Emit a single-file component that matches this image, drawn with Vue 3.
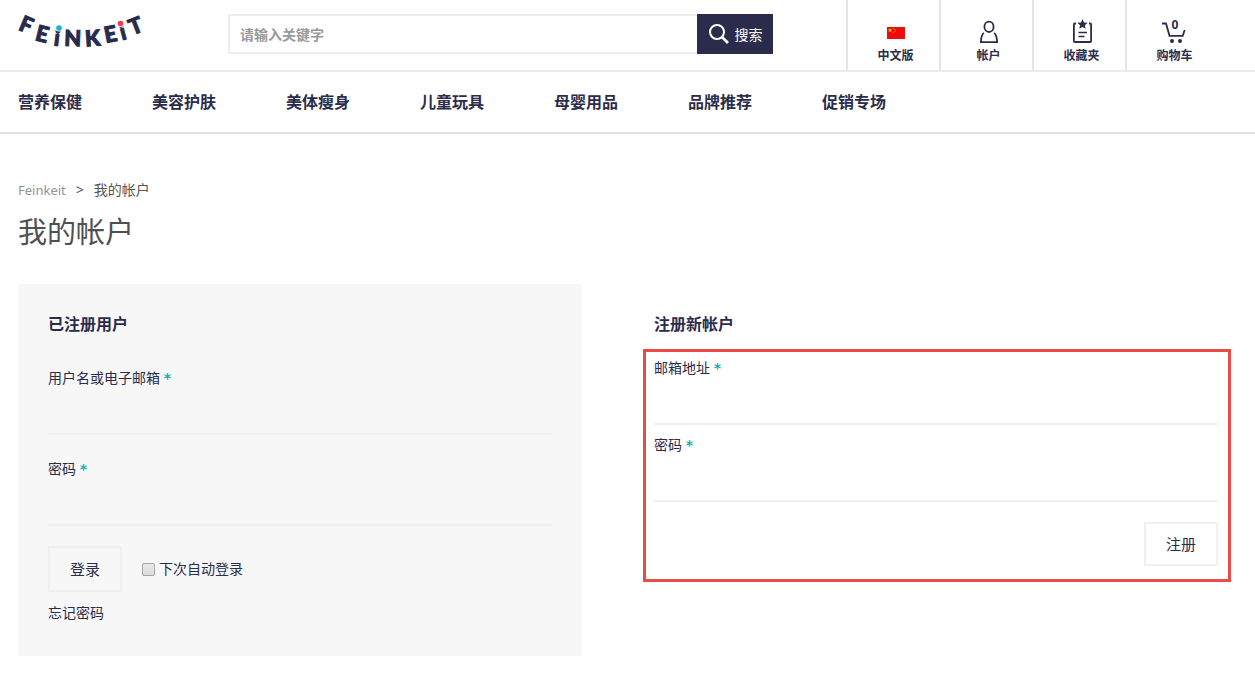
<script setup>
import { ref } from 'vue'

const categories = ['营养保健', '美容护肤', '美体瘦身', '儿童玩具', '母婴用品', '品牌推荐', '促销专场']

const logoLetters = [
  { char: 'F', x: 29, y: 18, angle: 23 },
  { char: 'E', x: 44, y: 27, angle: 14 },
  { char: 'i', x: 58, y: 31, angle: 7 },
  { char: 'N', x: 73, y: 31, angle: 2 },
  { char: 'K', x: 92, y: 31, angle: -4 },
  { char: 'E', x: 109, y: 27, angle: -11 },
  { char: 'i', x: 121, y: 25, angle: -15 },
  { char: 'T', x: 133, y: 19, angle: -21 },
]

const keyword = ref('')
const remember = ref(false)
const login = ref({ user: '', password: '' })
const signup = ref({ email: '', password: '' })
</script>

<template>
  <div class="page">
    <header class="header">
      <a href="#" class="logo" aria-label="Feinkeit">
        <svg width="150" height="60" viewBox="8 0 150 60">
          <g
            v-for="(letter, i) in logoLetters"
            :key="i"
            :transform="`translate(${letter.x} ${letter.y}) rotate(${letter.angle})`"
          >
            <text class="logo-letter" text-anchor="middle" y="15">{{ letter.char }}</text>
          </g>
          <circle cx="59" cy="28" r="3.600" fill="#fff" />
          <circle cx="120.500" cy="23.500" r="3.600" fill="#fff" />
          <circle cx="59" cy="28" r="2.800" fill="#12b8bd" />
          <circle cx="120.500" cy="23.500" r="2.800" fill="#f5394f" />
        </svg>
      </a>

      <form class="search" role="search" @submit.prevent>
        <input v-model="keyword" type="text" class="search-input" placeholder="请输入关键字" aria-label="请输入关键字" />
        <button type="submit" class="search-button">
          <svg width="22" height="22" viewBox="0 0 22 22" fill="none" stroke="#fff">
            <circle cx="9" cy="9" r="7" stroke-width="2" />
            <path d="M14 14l6 6" stroke-width="2.600" />
          </svg>
          搜索
        </button>
      </form>

      <nav class="tools">
        <a href="#" class="tool">
          <svg width="26" height="26" viewBox="0 0 26 26">
            <rect x="4" y="9" width="18" height="12" fill="#f00a0a" />
            <path d="M7 10.200l.6 1.400h1.500l-1.200 1 .5 1.500L7 13.200l-1.400.9.5-1.500-1.200-1h1.500z" fill="#ffde00" />
            <g fill="#ffb300">
              <circle cx="10.500" cy="10.500" r=".6" /><circle cx="12" cy="11.500" r=".6" />
              <circle cx="12" cy="13.300" r=".6" /><circle cx="10.500" cy="14.500" r=".6" />
            </g>
          </svg>
          中文版
        </a>
        <a href="#" class="tool">
          <svg width="26" height="26" viewBox="0 0 26 26" fill="none" stroke="#2b2c4b" stroke-width="1.800">
            <ellipse cx="13" cy="8.800" rx="4.600" ry="5.200" />
            <path d="M7.800 14.800C6 16.400 5 19 4.900 24.100h16.200c-.1-5.100-1.100-7.700-2.900-9.300" />
          </svg>
          帐户
        </a>
        <a href="#" class="tool">
          <svg width="26" height="26" viewBox="0 0 26 26" fill="none" stroke="#2b2c4b" stroke-width="1.800">
            <path d="M7 5.500H5.800Q4.900 5.500 4.900 6.400V23q0 1 1 1h15.200q1 0 1-1V6.400q0-.9-.9-.9H20" />
            <path d="M9.500 14.500h8.500M9.500 18.500h6" stroke-width="1.700" />
            <path d="M13.500 1l1.500 3.400 3.700.3-2.800 2.500.8 3.600-3.200-1.900-3.200 1.900.8-3.600-2.800-2.500 3.700-.3z" fill="#2b2c4b" stroke="none" />
          </svg>
          收藏夹
        </a>
        <a href="#" class="tool">
          <svg width="26" height="26" viewBox="0 0 26 26" fill="none" stroke="#2b2c4b" stroke-width="1.800">
            <path d="M0 5.500h4L7.500 17.800h13.200L22.700 12" />
            <circle cx="10" cy="23" r="2" fill="#2b2c4b" stroke="none" />
            <circle cx="18" cy="23" r="2" fill="#2b2c4b" stroke="none" />
            <text class="cart-count" x="13" y="11" text-anchor="middle">0</text>
          </svg>
          购物车
        </a>
      </nav>
    </header>

    <nav class="categories">
      <a v-for="name in categories" :key="name" href="#">{{ name }}</a>
    </nav>

    <main class="main">
      <div class="breadcrumb">
        <a href="#">Feinkeit</a><span>&gt;</span><span>我的帐户</span>
      </div>
      <h1>我的帐户</h1>

      <div class="columns">
        <section class="login">
          <h2>已注册用户</h2>
          <form class="login-form" @submit.prevent>
            <div class="field">
              <label for="login-user">用户名或电子邮箱 <span class="required">*</span></label>
              <input id="login-user" v-model="login.user" type="text" />
            </div>
            <div class="field">
              <label for="login-password">密码 <span class="required">*</span></label>
              <input id="login-password" v-model="login.password" type="password" />
            </div>
            <div class="login-actions">
              <button type="submit" class="button">登录</button>
              <label class="remember">
                <input v-model="remember" type="checkbox" />下次自动登录
              </label>
            </div>
            <a href="#" class="forgot">忘记密码</a>
          </form>
        </section>

        <section class="signup">
          <h2>注册新帐户</h2>
          <form class="signup-form" @submit.prevent>
            <div class="field">
              <label for="signup-email">邮箱地址 <span class="required">*</span></label>
              <input id="signup-email" v-model="signup.email" type="email" />
            </div>
            <div class="field">
              <label for="signup-password">密码 <span class="required">*</span></label>
              <input id="signup-password" v-model="signup.password" type="password" />
            </div>
            <button type="submit" class="button">注册</button>
          </form>
        </section>
      </div>
    </main>
  </div>
</template>

<style>
body {
  margin: 0;
  background: #fff;
}
</style>

<style scoped>
.page,
.page button,
.page input {
  font-family: "Noto Sans", "Noto Sans CJK SC", sans-serif;
}

.page {
  color: #2b2c4b;
  font-size: 14px;
  line-height: 20px;
}

.page * {
  box-sizing: border-box;
}

a {
  color: inherit;
  text-decoration: none;
}

.header {
  display: flex;
  align-items: flex-start;
  padding: 0 37px 0 8px;
  border-bottom: 2px solid #ebebeb;
}

.logo {
  flex: 0 0 220px;
}

.logo svg,
.tool svg {
  display: block;
  overflow: visible;
}

.logo-letter {
  font-family: Lato, sans-serif;
  font-size: 22px;
  font-weight: 900;
  fill: #272c4c;
  stroke: #272c4c;
  stroke-width: 1px;
}

.search {
  display: flex;
  flex: 0 1 545px;
  height: 40px;
  margin-top: 14px;
}

.search-input {
  flex: 1;
  min-width: 0;
  padding: 0 10px;
  border: 2px solid #ededed;
  border-right: 0;
  border-radius: 0;
  outline: 0;
  background: #fff;
  color: #2b2c4b;
  font-size: 14px;
  font-weight: 700;
}

.search-input::placeholder {
  color: #999;
  opacity: 1;
}

.search-button {
  display: flex;
  align-items: center;
  justify-content: center;
  gap: 5px;
  width: 76px;
  padding: 0;
  border: 0;
  background: #2b2c4b;
  color: #fff;
  font-size: 14px;
}

.tools {
  display: flex;
  margin-left: auto;
}

.tool {
  display: flex;
  flex-direction: column;
  align-items: center;
  gap: 4px;
  width: 93px;
  height: 70px;
  padding: 18px 0 0 4px;
  border-left: 2px solid #e4e4e4;
  font-size: 12px;
  font-weight: 700;
  line-height: 16px;
}

.cart-count {
  fill: #2b2c4b;
  stroke: none;
  font-size: 12px;
  font-weight: 700;
}

.categories {
  display: flex;
  gap: 70px;
  padding: 20px 18px;
  border-bottom: 2px solid #e2e2e2;
  font-size: 16px;
  font-weight: 700;
}

.main {
  padding: 46px 37px 0 18px;
}

.breadcrumb {
  display: flex;
  gap: 10px;
  color: #555;
}

.breadcrumb a {
  color: #949494;
  font-size: 13px;
}

h1 {
  margin: 12px 0 32px;
  color: #505050;
  font-size: 29px;
  font-weight: 400;
  line-height: 40px;
}

h2 {
  margin: 0;
  font-size: 16px;
  font-weight: 700;
  line-height: 20px;
}

.columns {
  display: grid;
  grid-template-columns: 1fr 1fr;
  align-items: start;
  gap: 72px;
}

.login {
  padding: 30px 30px 33px;
  background: #f7f7f7;
}

.login-form {
  display: grid;
  gap: 24px;
  margin-top: 34px;
}

.signup {
  padding-top: 30px;
}

.signup-form {
  display: grid;
  gap: 10px;
  margin: 15px -13px 0 -11px;
  padding: 6px 10px 13px 8px;
  border: 3px solid #e84c47;
}

.field label {
  display: block;
}

.field input {
  display: block;
  width: 100%;
  height: 47px;
  padding: 0;
  border: 0;
  border-bottom: 2px solid #f0f0f0;
  border-radius: 0;
  outline: 0;
  background: transparent;
  color: #2b2c4b;
  font-size: 14px;
}

.required {
  color: #14adb5;
  font-family: "DejaVu Sans", sans-serif;
  font-weight: 700;
}

.button {
  width: 74px;
  height: 46px;
  padding: 0 0 2px;
  border: 2px solid #f0f0f0;
  background: transparent;
  color: #2b2c4b;
  font-size: 15px;
}

.signup-form .button {
  justify-self: end;
  height: 44px;
  margin-top: 10px;
}

.login-actions {
  display: flex;
  align-items: center;
  gap: 20px;
  margin-top: -4px;
}

.remember {
  display: flex;
  align-items: center;
  gap: 4px;
}

.remember input {
  appearance: none;
  width: 13px;
  height: 13px;
  margin: 0;
  border: 1px solid #a5a5a5;
  border-radius: 2px;
  background: linear-gradient(#e9e9e9, #dcdcdc);
}

.remember input:checked {
  background: #2b2c4b;
}

.forgot {
  justify-self: start;
  margin-top: -13px;
}
</style>
